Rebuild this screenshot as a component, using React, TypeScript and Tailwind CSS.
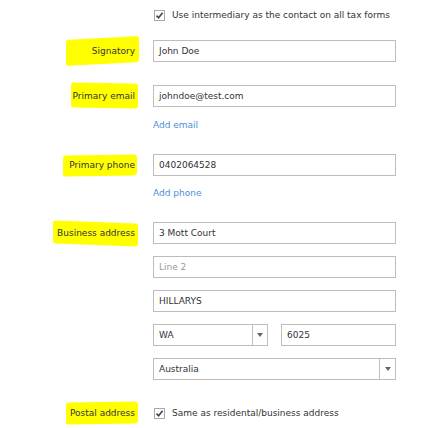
import React from "react";

const font = { fontFamily: '"DejaVu Sans", Verdana, sans-serif' };

function Check() {
  return (
    <span className="inline-flex h-[11px] w-[11px] items-center justify-center border border-[#a8a8a8] bg-white">
      <svg width="9" height="9" viewBox="0 0 9 9">
        <path d="M1.5 4.6 L3.6 6.8 L7.6 1.8" fill="none" stroke="#444" strokeWidth="1.6" />
      </svg>
    </span>
  );
}

function Label({ text, hl }: { text: string; hl: string }) {
  return (
    <div className="flex w-[135px] shrink-0 justify-end">
      <span className="relative inline-block">
        <span className={"absolute rounded-[3px] bg-[#ffff00] " + hl} />
        <span className="relative text-[#333]">{text}</span>
      </span>
    </div>
  );
}

function Input({ value, placeholder, w = "w-[243px]" }: { value?: string; placeholder?: string; w?: string }) {
  return (
    <div className={"flex h-[22px] items-center border border-[#bdbdbd] bg-white pl-[5px] " + w}>
      {value ? <span className="text-[#333]">{value}</span> : <span className="text-[#9a9a9a]">{placeholder}</span>}
    </div>
  );
}

function Select({ value, w, inner }: { value: string; w: string; inner: string }) {
  return (
    <div className={"flex h-[22px] items-stretch border border-[#bdbdbd] bg-white " + w}>
      <div className={"flex items-center pl-[5px] text-[#333] " + inner}>{value}</div>
      <div className="flex flex-1 items-center justify-center border-l border-[#bdbdbd]">
        <svg width="6" height="4" viewBox="0 0 6 4">
          <path d="M0 0 H6 L3 4 Z" fill="#666" />
        </svg>
      </div>
    </div>
  );
}

export default function App() {
  return (
    <div className="h-[428px] w-[438px] overflow-hidden bg-white text-[9px] leading-[11px]" style={font}>
      <div className="ml-[154px] flex items-center gap-[7px] pt-[10px]">
        <Check />
        <span className="text-[#333]">Use intermediary as the contact on all tax forms</span>
      </div>

      <div className="mt-[19px] flex items-center">
        <Label text="Signatory" hl="-left-[26px] -right-[4px] -top-[8px] -bottom-[7px] -skew-y-3" />
        <div className="ml-[18px]"><Input value="John Doe" /></div>
      </div>

      <div className="mt-[23px] flex items-center">
        <Label text="Primary email" hl="-left-[2px] -right-[3px] -top-[8px] -bottom-[6px] skew-y-1" />
        <div className="ml-[18px]"><Input value="johndoe@test.com" /></div>
      </div>
      <div className="ml-[153px] mt-[13px] text-[#4a8fd6]">Add email</div>

      <div className="mt-[23px] flex items-center">
        <Label text="Primary phone" hl="-left-[6px] -right-[2px] -top-[5px] -bottom-[5px] -skew-y-1" />
        <div className="ml-[18px]"><Input value="0402064528" /></div>
      </div>
      <div className="ml-[153px] mt-[12px] text-[#4a8fd6]">Add phone</div>

      <div className="mt-[23px] flex items-start">
        <div className="flex h-[22px] items-center">
          <Label text="Business address" hl="-left-[4px] -right-[3px] -top-[6px] -bottom-[6px] skew-y-2" />
        </div>
        <div className="ml-[18px] flex flex-col gap-[12px]">
          <Input value="3 Mott Court" />
          <Input placeholder="Line 2" />
          <Input value="HILLARYS" />
          <div className="flex gap-[13px]">
            <Select value="WA" w="w-[115px]" inner="w-[98px]" />
            <Input value="6025" w="w-[115px]" />
          </div>
          <Select value="Australia" w="w-[243px]" inner="w-[225px]" />
        </div>
      </div>

      <div className="mt-[28px] flex items-center">
        <Label text="Postal address" hl="-left-[4px] -right-[3px] -top-[6px] -bottom-[5px] -skew-y-1" />
        <div className="ml-[19px] flex items-center gap-[7px]">
          <Check />
          <span className="text-[#333]">Same as residental/business address</span>
        </div>
      </div>
    </div>
  );
}
